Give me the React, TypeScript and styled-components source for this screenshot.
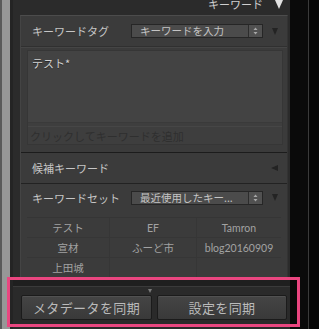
import React from 'react';
import styled, { createGlobalStyle } from 'styled-components';

const GlobalStyle = createGlobalStyle`
  html, body {
    margin: 0;
    padding: 0;
    background: #050505;
  }
  body {
    width: 319px;
    height: 329px;
    overflow: hidden;
    font-family: "Noto Sans CJK JP", "Noto Sans", sans-serif;
  }
`;

const jp = `"Noto Sans CJK JP", "Noto Sans", sans-serif`;

const Screen = styled.div`
  position: relative;
  display: flex;
  width: 319px;
  height: 329px;
  overflow: hidden;
`;

const Rail = styled.div`
  width: 13px;
  flex-shrink: 0;
  background: linear-gradient(to right, #5a5a5a 0 2px, #979797 2px 10px, #242424 10px 13px);
`;

const Main = styled.div`
  width: 277px;
  flex-shrink: 0;
  display: flex;
  flex-direction: column;
  background: #2b2b2b;
`;

const Gutter = styled.div`
  flex: 1;
  background: linear-gradient(to right, #0a0a0a 0 18px, #3a3a3a 18px 19px, #060606 19px);
`;

const Header = styled.div`
  height: 15px;
  flex-shrink: 0;
  display: flex;
  justify-content: flex-end;
  align-items: flex-start;
  gap: 12px;
  padding-right: 7px;
  overflow: hidden;
  color: #cfcfcf;
  font-family: ${jp};
  font-size: 11px;
  line-height: 12px;
`;

const HeaderText = styled.span`
  margin-top: -2px;
`;

const Triangle = styled.span<{ dir: 'down' | 'left'; color: string; size: number }>`
  display: inline-block;
  width: 0;
  height: 0;
  flex-shrink: 0;
  ${({ dir, color, size }) =>
    dir === 'down'
      ? `border-left: ${size / 2}px solid transparent; border-right: ${size / 2}px solid transparent; border-top: ${size}px solid ${color};`
      : `border-top: ${size / 2}px solid transparent; border-bottom: ${size / 2}px solid transparent; border-right: ${size}px solid ${color};`}
`;

const Panel = styled.div`
  margin: 0 2px 0 7px;
  height: 262px;
  flex-shrink: 0;
  display: flex;
  flex-direction: column;
  background: #3b3b3b;
  border-top: 1px solid #4c4c4c;
  border-left: 1px solid #444;
  border-right: 1px solid #333;
  box-sizing: border-box;
`;

const Row = styled.div<{ h: number }>`
  height: ${({ h }) => h}px;
  flex-shrink: 0;
  display: flex;
  align-items: center;
  padding: 0 9px 0 11px;
  color: #c6c6c6;
  font-family: ${jp};
  font-size: 11px;
`;

const Label = styled.span`
  width: 99px;
  flex-shrink: 0;
  white-space: nowrap;
`;

const Select = styled.div`
  width: 132px;
  height: 14px;
  box-sizing: border-box;
  display: flex;
  border: 1px solid #262626;
  background: #4b4b4b;
  color: #c4c4c4;
  font-size: 10.5px;
  line-height: 12px;
  margin-right: 9px;
`;

const SelectText = styled.span`
  flex: 1;
  padding-left: 8px;
  white-space: nowrap;
`;

const Spinner = styled.span`
  width: 13px;
  flex-shrink: 0;
  border-left: 1px solid #2c2c2c;
  background: #515151;
  display: flex;
  align-items: center;
  justify-content: center;
`;

const Spacer = styled.span`
  flex: 1;
`;

const Divider = styled.div<{ top: string; bottom?: string }>`
  height: 1px;
  flex-shrink: 0;
  background: ${({ top }) => top};
  ${({ bottom }) => (bottom ? `border-bottom: 1px solid ${bottom};` : '')}
`;

const KeywordBox = styled.div`
  margin: 2px 4px 7px 6px;
  height: 95px;
  flex-shrink: 0;
  display: flex;
  flex-direction: column;
  border: 1px solid #363636;
  box-sizing: border-box;
  background: #3e3e3e;
`;

const KeywordArea = styled.div`
  height: 73px;
  box-sizing: border-box;
  padding: 4px 0 0 4px;
  background: #434343;
  border-bottom: 1px solid #3a3a3a;
  color: #d2d2d2;
  font-family: ${jp};
  font-size: 11px;
  text-shadow: 0 1px 0 #2a2a2a;
`;

const AddField = styled.div`
  margin-top: 3px;
  height: 17px;
  padding-left: 2px;
  display: flex;
  align-items: center;
  color: #2f2f2f;
  font-family: ${jp};
  font-size: 11px;
  border-top: 1px solid #464646;
`;

const KeywordTable = styled.div`
  margin: 6px 0 0 6px;
  width: 254px;
  display: grid;
  grid-template-columns: 83px 87px 84px;
  border-top: 1px solid #353535;
`;

const Cell = styled.div<{ last?: boolean }>`
  height: 20px;
  box-sizing: border-box;
  display: flex;
  align-items: center;
  justify-content: center;
  border-bottom: 1px solid #363636;
  border-right: ${({ last }) => (last ? 'none' : '1px solid #363636')};
  color: #a2a2a2;
  font-family: "Lato", ${jp};
  font-size: 10.5px;
  white-space: nowrap;
`;

const SyncBar = styled.div`
  height: 52px;
  flex-shrink: 0;
  display: flex;
  flex-direction: column;
  background: #2a2a2a;
`;

const SyncTop = styled.div`
  height: 9px;
  background: #1f1f1f;
  border-bottom: 1px solid #3a3a3a;
`;

const Grip = styled.div`
  height: 8px;
  display: flex;
  justify-content: center;
  padding-top: 2px;
  padding-right: 3px;
  box-sizing: border-box;
`;

const Buttons = styled.div`
  display: flex;
  gap: 5px;
  padding: 0 3px 0 8px;
`;

const SyncButton = styled.button<{ w: number }>`
  width: ${({ w }) => w}px;
  height: 25px;
  padding: 0;
  border: 1px solid #1b1b1b;
  border-radius: 2px;
  background: linear-gradient(#454545, #393939);
  box-shadow: inset 0 1px 0 #515151;
  color: #bababa;
  font-family: ${jp};
  font-size: 13px;
  letter-spacing: 0.4px;
`;

const Highlight = styled.div`
  position: absolute;
  left: 7px;
  top: 277px;
  width: 293px;
  height: 50px;
  box-sizing: border-box;
  border: 3px solid #ea4680;
  pointer-events: none;
`;

const SpinnerIcon = () => (
  <svg width="5" height="8" viewBox="0 0 5 8">
    <path d="M2.5 0.5 L4.5 3 L0.5 3 Z" fill="#a8a8a8" />
    <path d="M2.5 7.5 L4.5 5 L0.5 5 Z" fill="#a8a8a8" />
  </svg>
);

const tableRows = [
  ['テスト', 'EF', 'Tamron'],
  ['宣材', 'ふーど市', 'blog20160909'],
  ['上田城', '', ''],
];

export default function App() {
  return (
    <Screen>
      <GlobalStyle />
      <Rail />
      <Main>
        <Header>
          <HeaderText>キーワード</HeaderText>
          <Triangle dir="down" color="#e2e2e2" size={9} />
        </Header>
        <Panel>
          <Row h={30}>
            <Label>キーワードタグ</Label>
            <Select>
              <SelectText>キーワードを入力</SelectText>
              <Spinner><SpinnerIcon /></Spinner>
            </Select>
            <Triangle dir="down" color="#232323" size={7} />
          </Row>
          <Divider top="#303030" bottom="#454545" />
          <KeywordBox>
            <KeywordArea>テスト*</KeywordArea>
            <AddField>クリックしてキーワードを追加</AddField>
          </KeywordBox>
          <Divider top="#1c1c1c" />
          <Row h={30}>
            <Label>候補キーワード</Label>
            <Spacer />
            <Triangle dir="left" color="#232323" size={7} />
          </Row>
          <Divider top="#222" />
          <Row h={27}>
            <Label>キーワードセット</Label>
            <Select>
              <SelectText>最近使用したキー...</SelectText>
              <Spinner><SpinnerIcon /></Spinner>
            </Select>
            <Triangle dir="down" color="#232323" size={7} />
          </Row>
          <KeywordTable>
            {tableRows.map((r, i) =>
              r.map((c, j) => (
                <Cell key={`${i}-${j}`} last={j === 2}>{c}</Cell>
              ))
            )}
          </KeywordTable>
        </Panel>
        <SyncBar>
          <SyncTop />
          <Grip>
            <Triangle dir="down" color="#7a7a7a" size={4} />
          </Grip>
          <Buttons>
            <SyncButton w={131}>メタデータを同期</SyncButton>
            <SyncButton w={130}>設定を同期</SyncButton>
          </Buttons>
        </SyncBar>
      </Main>
      <Gutter />
      <Highlight />
    </Screen>
  );
}
